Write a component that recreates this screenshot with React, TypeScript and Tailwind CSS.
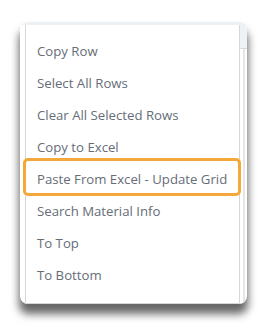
import React from "react";

const items = [
  "Copy Row",
  "Select All Rows",
  "Clear All Selected Rows",
  "Copy to Excel",
  "Paste From Excel - Update Grid",
  "Search Material Info",
  "To Top",
  "To Bottom",
];

export default function App() {
  return (
    <div className="w-[267px] h-[325px] bg-white pt-[22px] pl-[20px]" style={{ fontFamily: '"Open Sans", "Noto Sans", sans-serif' }}>
      <div className="w-[227px] h-[282px] rounded-[8px] bg-white overflow-hidden shadow-[0_9px_9px_1px_rgba(0,0,0,0.6)] flex flex-col">
        <div className="h-[3px] bg-[#edf0f5] shrink-0" />
        <div className="flex flex-1">
          <div className="w-[5px] shrink-0" />
          <div className="w-[215px] border-l border-r border-b border-[#d6d6d6] pt-[11px] pb-[5px] flex flex-col">
            {items.map((t, i) => (
              <div key={t} className="relative h-[32px] flex items-center pl-[11px] text-[13.2px] text-[#666d77]">
                {i === 4 && (
                  <div className="absolute top-[-6px] bottom-[0px] left-[-3px] right-[-2px] border-[3px] border-[#f5a83a] rounded-[5px]" />
                )}
                <span className="relative">{t}</span>
              </div>
            ))}
          </div>
          <div className="w-[7px] shrink-0 flex flex-col">
            <div className="h-[23px] bg-[#eef1f6]" />
            <div className="h-px bg-[#d9dde3]" />
            <div className="flex-1 flex">
              <div className="w-[3px]" />
              <div className="w-[2px] bg-[#e6e6e6]" />
            </div>
          </div>
        </div>
      </div>
    </div>
  );
}
